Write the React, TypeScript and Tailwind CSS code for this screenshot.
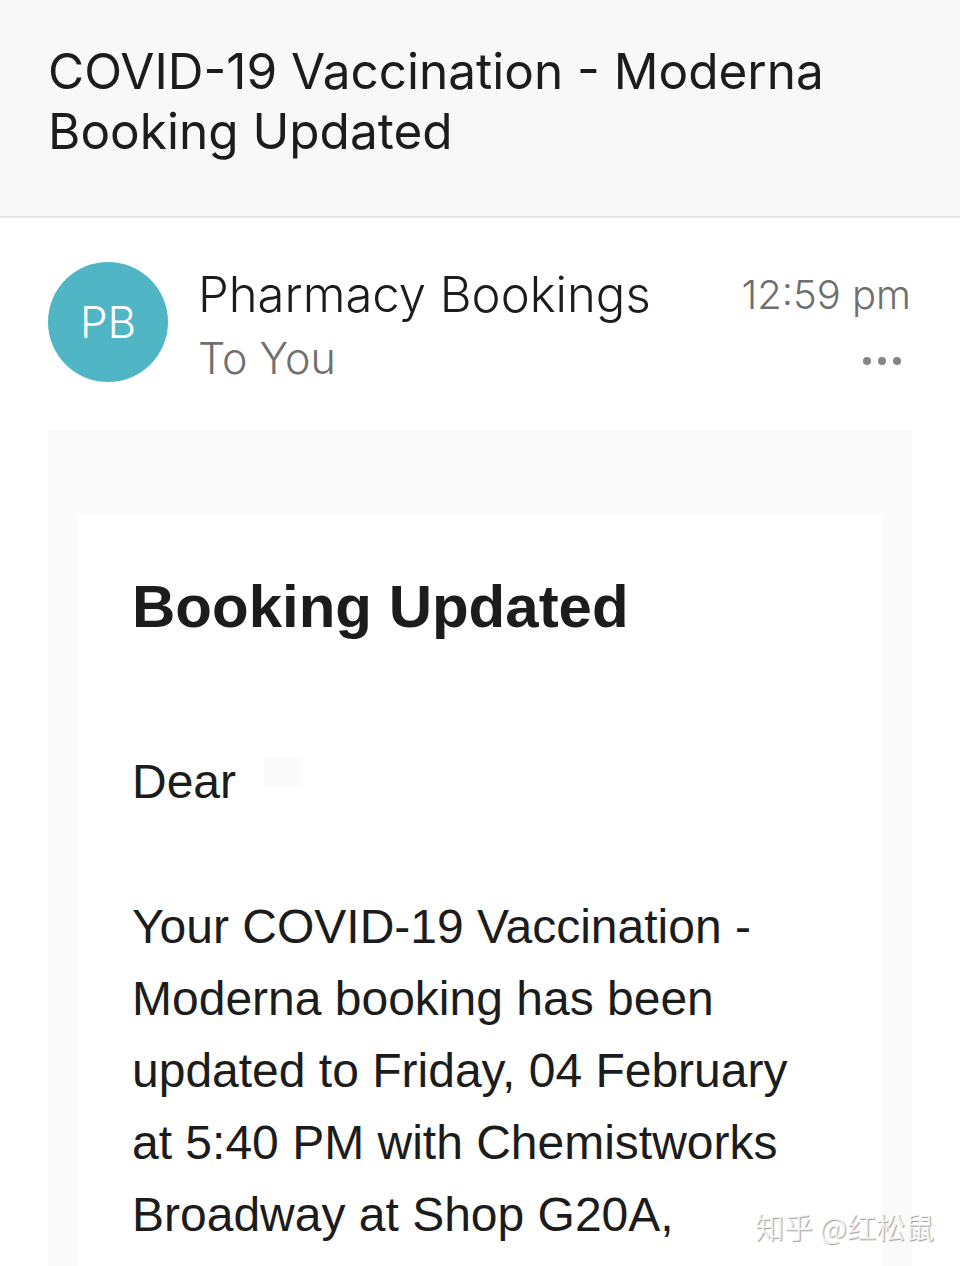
import React from 'react';

const bodyLines = [
    'Your COVID-19 Vaccination -',
    'Moderna booking has been',
    'updated to Friday, 04 February',
    'at 5:40 PM with Chemistworks',
    'Broadway at Shop G20A,',
];

export default function App() {
    return (
        <div className="relative h-[1266px] w-[960px] overflow-hidden bg-white font-['Inter','Noto_Sans',sans-serif]">
            {/* SUBJECT */}
            <div className="h-[218px] border-b-2 border-[#e6e6e6] bg-[#f8f8f8] pl-[48px] pt-[41px]">
                <h1 className="text-[49.5px] leading-[60px] font-normal text-[#1c1c1c]">
                    COVID-19 Vaccination - Moderna
                    <br />
                    Booking Updated
                </h1>
            </div>

            {/* SENDER */}
            <div className="flex h-[212px] pl-[48px] pr-[49px] pt-[44px]">
                <div className="flex h-[120px] w-[120px] shrink-0 items-center justify-center rounded-full bg-[#50b5c4] text-[44px] font-light text-white">
                    PB
                </div>
                <div className="ml-[30px] flex-1 pt-[1px]">
                    <div className="text-[49px] leading-[64px] font-light text-[#1c1c1c]">Pharmacy Bookings</div>
                    <div className="mt-[-1px] text-[43px] leading-[64px] font-light text-[#6f6f6f]">To You</div>
                </div>
                <div className="flex flex-col items-end pt-[8px]">
                    <div className="text-[40px] leading-[50px] font-light text-[#6f6f6f]">12:59 pm</div>
                    <div className="mr-[10px] mt-[37px] flex gap-[7px]">
                        <span className="h-[8px] w-[8px] rounded-full bg-[#858585]" />
                        <span className="h-[8px] w-[8px] rounded-full bg-[#858585]" />
                        <span className="h-[8px] w-[8px] rounded-full bg-[#858585]" />
                    </div>
                </div>
            </div>

            {/* EMAIL BODY */}
            <div className="mx-[48px] h-[900px] bg-[#fafafa] px-[30px] pt-[85px]">
                <div className="h-[800px] bg-white pl-[54px] pt-[56px] font-['Liberation_Sans',Arial,sans-serif] text-[#1c1c1c]">
                    <h2 className="text-[60px] leading-[72px] font-bold">Booking Updated</h2>
                    <div className="mt-[103px] flex items-start text-[48px] leading-[72px]">
                        Dear
                        <span className="ml-[28px] mt-[11px] h-[30px] w-[37px] bg-[#fafafa]" />
                    </div>
                    <div className="mt-[73px] text-[48px] leading-[72px]">
                        {bodyLines.map((line) => (
                            <div key={line}>{line}</div>
                        ))}
                    </div>
                </div>
            </div>

            {/* WATERMARK */}
            <div className="absolute left-[755px] top-[1208px] font-['Noto_Sans_CJK_SC',sans-serif] text-[29px] leading-[36px] whitespace-nowrap text-white/80 [text-shadow:1px_1px_1px_#a0a0a0]">
                知乎 @红松鼠
            </div>
        </div>
    );
}
